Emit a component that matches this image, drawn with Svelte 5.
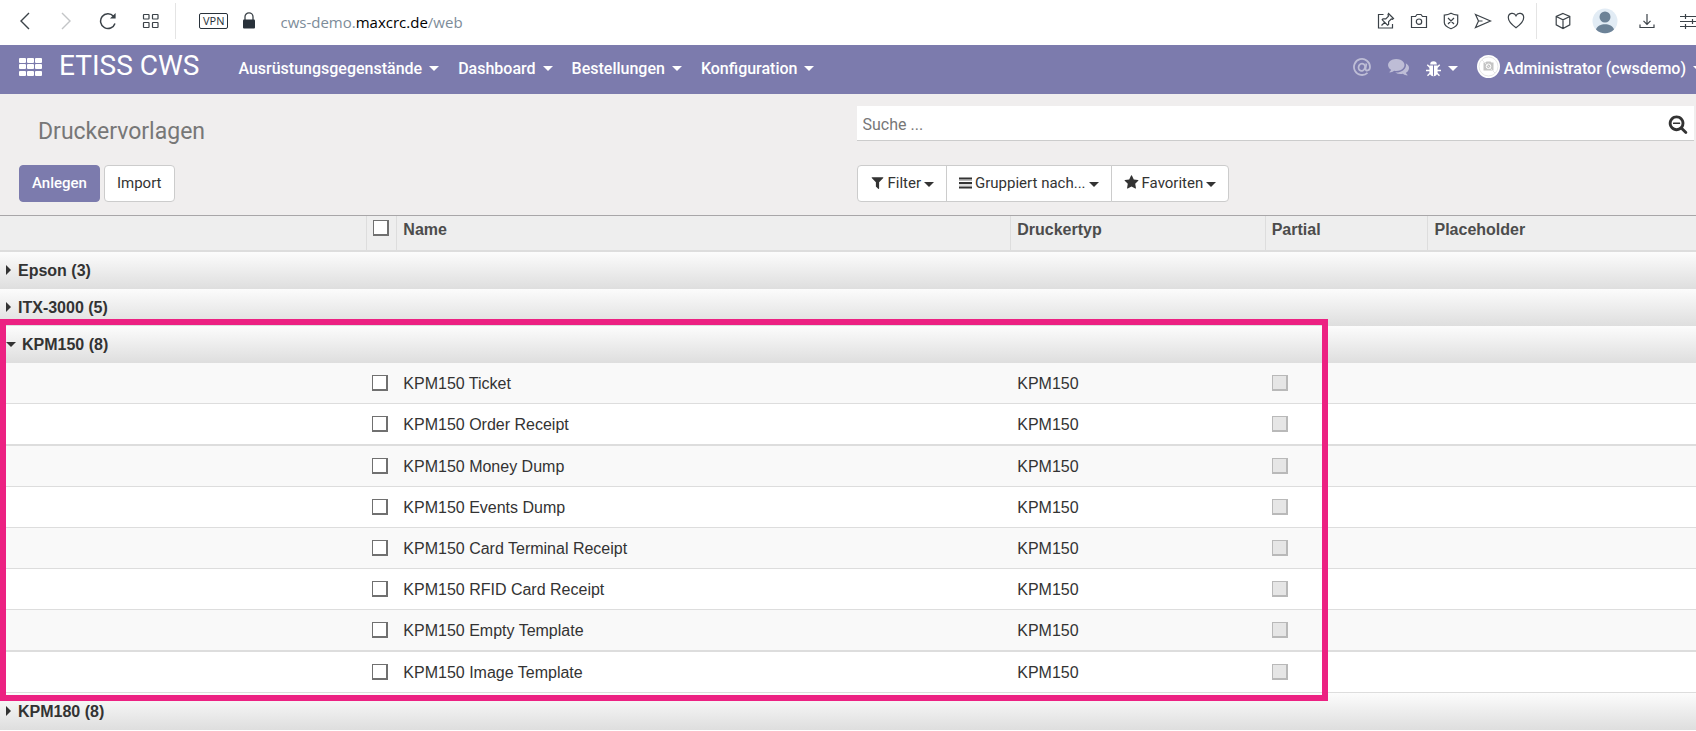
<script lang="ts">
    type Group = {
        name: string,
        count: number,
        open: boolean,
        rows: string[]
    }

    const menus = ["Ausrüstungsgegenstände", "Dashboard", "Bestellungen", "Konfiguration"];

    let groups: Group[] = $state([
        { name: "Epson", count: 3, open: false, rows: [] },
        { name: "ITX-3000", count: 5, open: false, rows: [] },
        {
            name: "KPM150",
            count: 8,
            open: true,
            rows: [
                "Ticket",
                "Order Receipt",
                "Money Dump",
                "Events Dump",
                "Card Terminal Receipt",
                "RFID Card Receipt",
                "Empty Template",
                "Image Template",
            ],
        },
        { name: "KPM180", count: 8, open: false, rows: [] },
    ]);

    let search = $state("");
</script>

{#snippet fa(path: string, size: number)}
    <svg class="fa" width={size} height={size} viewBox="0 0 1792 1792" aria-hidden="true">
        <path d={path} />
    </svg>
{/snippet}

<div class="browser">
    <button class="tool" aria-label="Zurück">
        <svg width="16" height="18" viewBox="0 0 16 18"><path d="M12 1 4 9l8 8" stroke-width="1.4" /></svg>
    </button>
    <button class="tool dim" aria-label="Vorwärts">
        <svg width="16" height="18" viewBox="0 0 16 18"><path d="m4 1 8 8-8 8" stroke-width="1.4" /></svg>
    </button>
    <button class="tool" aria-label="Neu laden">
        <svg width="18" height="18" viewBox="0 0 18 18">
            <path d="M16 11.500A7.400 7.400 0 1 1 14.500 4.200" stroke-width="1.500" />
            <path d="M16.600 1v5.600H11z" fill="#3b4248" stroke="none" />
        </svg>
    </button>
    <button class="tool" aria-label="Schnellwahl">
        <svg width="18" height="16" viewBox="0 0 18 16">
            <rect x="1.500" y="1.500" width="5.500" height="4.500" rx="0.500" />
            <rect x="10.500" y="1.500" width="5.500" height="4.500" rx="0.500" />
            <rect x="1.500" y="9.500" width="5.500" height="5" rx="0.500" />
            <rect x="10.500" y="9.500" width="5.500" height="5" rx="0.500" />
        </svg>
    </button>
    <div class="address">
        <span class="vpn">VPN</span>
        <svg width="14" height="17" viewBox="0 0 14 17" aria-hidden="true">
            <path d="M3 8V4.800a4 4 0 0 1 8 0V8" stroke-width="1.300" />
            <rect x="1" y="7.500" width="12" height="9" rx="1" fill="#28313a" stroke="none" />
        </svg>
        <span class="url">cws-demo.<b>maxcrc.de</b>/web</span>
    </div>
    <div class="tools">
        <button class="tool" aria-label="Anheften">
            <svg width="18" height="18" viewBox="0 0 18 18">
                <path d="M6.500 2.500H1.500V16H15.500v-4M4.500 13.500 8 10M11.500 1.500l5 5-1 .8-1.200-.3-2.700 2.700v2.800l-1 .7-5.400-5.400.8-1h2.800l2.700-2.700-.5-1.300z" />
            </svg>
        </button>
        <button class="tool" aria-label="Schnappschuss">
            <svg width="18" height="16" viewBox="0 0 18 16">
                <path d="M1.500 3.500h4L7 1.500h4l1.500 2h4v11h-15z" />
                <circle cx="9" cy="8.700" r="2.700" />
            </svg>
        </button>
        <button class="tool" aria-label="Werbeblocker">
            <svg width="16" height="18" viewBox="0 0 16 18">
                <path d="M8 1.300c2 1.200 4 1.700 6.700 1.800v7.400c0 2.800-3.200 4.900-6.700 6.200-3.500-1.300-6.700-3.400-6.700-6.200V3.100C4 3 6 2.500 8 1.300zM5 6l6 6M11 6l-6 6" />
            </svg>
        </button>
        <button class="tool" aria-label="My Flow">
            <svg width="18" height="16" viewBox="0 0 18 16"><path d="M1.500 1.500 16.500 8l-15 6.500L4.500 8zM4.500 8h4" /></svg>
        </button>
        <button class="tool" aria-label="Lesezeichen">
            <svg width="18" height="17" viewBox="0 0 18 17">
                <path d="M9 15.800C5.500 13.300 1.300 9.500 1.300 5.600c0-5 6-5.600 7.700-1.800 1.700-3.800 7.700-3.200 7.700 1.800 0 3.900-4.200 7.700-7.700 10.200z" />
            </svg>
        </button>
        <span class="divider"></span>
        <button class="tool" aria-label="Wallet">
            <svg width="16" height="18" viewBox="0 0 16 18">
                <path d="M8 1.500l6.800 3v8.300L8 16.500l-6.800-3.700V4.500zM1.200 4.500 8 7.800l6.800-3.300M8 7.800v8.700" />
            </svg>
        </button>
        <button class="tool" aria-label="Profil">
            <svg width="26" height="26" viewBox="0 0 26 26">
                <circle cx="13" cy="13" r="12.500" fill="#e2ecf5" stroke="none" />
                <circle cx="13" cy="9" r="5.500" fill="#6c8297" stroke="none" />
                <path d="M4 21.500c2-7 16-7 18 0a12.500 12.500 0 0 1-18 0z" fill="#6c8297" stroke="none" />
            </svg>
        </button>
        <button class="tool" aria-label="Downloads">
            <svg width="16" height="16" viewBox="0 0 16 16"><path d="M8 1v10M4.500 7.800 8 11.300l3.500-3.500M1 11.500v3h14v-3" /></svg>
        </button>
        <button class="tool" aria-label="Einfache Einrichtung">
            <svg width="22" height="16" viewBox="-4 0 22 16"><path d="M0 3.500h18M0 8.500h18M0 13.500h18M5.500 1v5M12.500 6v5M5.500 11v5" /></svg>
        </button>
    </div>
</div>

<nav>
    <a class="apps" href="#apps" aria-label="Apps">
        <svg width="23" height="18" viewBox="0 0 23 18">
            {#each [0, 8, 16] as x}
                {#each [0, 6, 13] as y}
                    <rect {x} {y} width="7" height="5" rx="1" fill="#fff" />
                {/each}
            {/each}
        </svg>
    </a>
    <a class="brand" href="#home">ETISS CWS</a>
    <div class="menus">
        {#each menus as menu}
            <a href="#{menu}">{menu}<i class="caret"></i></a>
        {/each}
    </div>
    <div class="systray">
        <a class="faded" href="#mentions" aria-label="Erwähnungen">
            <svg width="18" height="18" viewBox="0 0 18 18" fill="none" stroke="#fff" stroke-width="1.800">
                <path d="M14.500 14.800A8 8 0 1 1 17 9c0 4-4.800 4.800-4.500 1.500l.9-5" />
                <ellipse cx="8.800" cy="9.200" rx="3.200" ry="3.600" transform="rotate(20 8.800 9.200)" />
            </svg>
        </a>
        <a class="faded comments" href="#chat" aria-label="Unterhaltungen">
            {@render fa("M1408 768q0 139-94 257t-256.500 186.500-353.500 68.500q-86 0-176-16-124 88-278 128-36 9-86 16h-3q-11 0-20.500-8t-11.500-21q-1-3-1-6.500t.5-6.500 2-6l2.500-5 3.500-5.500 4-5 4.500-5 4-4.500q5-6 23-25t26-29.500 22.500-29 25-38.500 20.500-44q-124-72-195-177t-71-224q0-139 94-257t256.500-186.500 353.500-68.500 353.500 68.500 256.500 186.500 94 257zm384 256q0 120-71 224.500t-195 176.500q10 24 20.500 44t25 38.500 22.500 29 26 29.500 23 25q1 1 4 4.500t4.500 5 4 5 3.500 5.500l2.500 5 2 6 .5 6.500-1 6.500q-3 14-13 22t-22 7q-50-7-86-16-154-40-278-128-90 16-176 16-271 0-472-132 58 4 88 4 161 0 309-45t264-129q125-92 192-212t67-254q0-77-23-152 129 71 204 178t75 230z", 21)}
        </a>
        <a class="debug" href="#debug" aria-label="Debug">
            <svg width="15" height="16" viewBox="0 0 15 16" fill="#fff">
                <path d="M4.200 3.600a3.300 3.300 0 0 1 6.600 0z" />
                <path d="M3.400 4.500H7v10.300h1V4.500h3.600v6.500c0 2.400-1.700 4.200-4.100 4.200S3.400 13.400 3.400 11z" />
                <path d="M4 6.500 1.300 3.800M11 6.500l2.700-2.700M4 9.500H0M11 9.500h4M4.300 12l-2.800 2.800M10.700 12l2.800 2.800" stroke="#fff" stroke-width="1.400" />
            </svg>
            <i class="caret"></i>
        </a>
        <a class="user" href="#user">
            <svg width="23" height="23" viewBox="0 0 23 23" aria-hidden="true">
                <circle cx="11.500" cy="11.500" r="11.500" fill="#fff" />
                <circle cx="11.500" cy="11.500" r="9.500" fill="none" stroke="#e6e6e6" />
                <path d="M6.500 7.500h2l1-1h4l1 1h2v8h-10z" fill="#c4c4c4" />
                <circle cx="11.500" cy="11.300" r="2.300" fill="#c4c4c4" stroke="#fff" />
                <path d="m5 5 13 13" stroke="#e6e6e6" />
            </svg>
            <span>Administrator (cwsdemo)</span>
            <i class="caret"></i>
        </a>
    </div>
</nav>

<header class="panel">
    <div class="left">
        <h1>Druckervorlagen</h1>
        <div class="buttons">
            <button class="btn primary">Anlegen</button>
            <button class="btn">Import</button>
        </div>
    </div>
    <div class="right">
        <div class="search">
            <input type="text" placeholder="Suche ..." aria-label="Suche" bind:value={search} />
            <button aria-label="Erweiterte Suche">
                {@render fa("M1088 800v64q0 13-9.500 22.500t-22.500 9.500h-576q-13 0-22.500-9.500t-9.500-22.500v-64q0-13 9.500-22.500t22.500-9.500h576q13 0 22.500 9.500t9.500 22.500zm128 32q0-185-131.500-316.500t-316.500-131.500-316.500 131.500-131.500 316.500 131.500 316.500 316.500 131.500 316.500-131.500 131.500-316.500zm512 832q0 53-37.500 90.500t-90.500 37.500q-54 0-90-38l-343-342q-179 124-399 124-143 0-273.500-55.500t-225-150-150-225-55.500-273.500 55.500-273.500 150-225 225-150 273.500-55.500 273.500 55.500 225 150 150 225 55.500 273.500q0 220-124 399l343 343q37 37 37 90z", 20)}
            </button>
        </div>
        <div class="filters">
            <button class="btn">
                {@render fa("M1595 295q17 41-14 70l-493 493v742q0 42-39 59-13 5-25 5-27 0-45-19l-256-256q-19-19-19-45v-486l-493-493q-31-29-14-70 17-39 59-39h1280q42 0 59 39z", 15)}
                Filter<i class="caret"></i>
            </button>
            <button class="btn">
                <svg class="bars" width="13" height="12" viewBox="0 0 13 12" aria-hidden="true">
                    <path d="M0 1.500h13M0 6h13M0 10.500h13" stroke="#333" stroke-width="2" />
                    <path d="M0 3.500h13M0 8h13" stroke="#bbb" />
                </svg>
                Gruppiert nach...<i class="caret"></i>
            </button>
            <button class="btn">
                {@render fa("M1728 647q0 22-26 48l-363 354 86 500q1 7 1 20 0 21-10.500 35.500t-30.500 14.500q-19 0-40-12l-449-236-449 236q-22 12-40 12-21 0-31.500-14.500t-10.500-35.500q0-6 2-20l86-500-364-354q-25-27-25-48 0-37 56-46l502-73 225-455q19-41 49-41t49 41l225 455 502 73q56 9 56 46z", 15)}
                Favoriten<i class="caret"></i>
            </button>
        </div>
    </div>
</header>

<main>
    <table>
        <colgroup>
            <col class="c-group" />
            <col class="c-check" />
            <col class="c-name" />
            <col class="c-type" />
            <col class="c-partial" />
            <col />
        </colgroup>
        <thead>
            <tr>
                <th></th>
                <th class="check"><input type="checkbox" aria-label="Alle auswählen" /></th>
                <th>Name</th>
                <th>Druckertyp</th>
                <th>Partial</th>
                <th>Placeholder</th>
            </tr>
        </thead>
        {#each groups as group}
            <tbody>
                <tr class="group" onclick={() => (group.open = !group.open)}>
                    <th colspan="6"><i class="arrow" class:open={group.open}></i>{group.name} ({group.count})</th>
                </tr>
            </tbody>
            {#if group.open}
                <tbody class="rows">
                    {#each group.rows as row}
                        <tr>
                            <td></td>
                            <td class="check"><input type="checkbox" aria-label="{group.name} {row}" /></td>
                            <td>{group.name} {row}</td>
                            <td>{group.name}</td>
                            <td><input type="checkbox" disabled aria-label="Partial" /></td>
                            <td></td>
                        </tr>
                    {/each}
                </tbody>
            {/if}
        {/each}
    </table>
    <div class="marker"></div>
</main>

<style>
    :global(body) {
        background: #fff;
        color: #333;
        font-family: Roboto, "Liberation Sans", sans-serif;
        overflow: hidden;
    }

    a {
        color: inherit;
        text-decoration: none;
    }

    button {
        font: inherit;
        color: inherit;
        cursor: pointer;
    }

    svg {
        display: block;
        flex: none;
    }

    .fa {
        fill: currentColor;
    }

    .caret {
        display: inline-block;
        flex: none;
        border: 5px solid transparent;
        border-top-color: currentColor;
        border-bottom: 0;
    }

    /* browser toolbar */
    .browser {
        display: flex;
        align-items: center;
        height: 45px;
        padding-left: 17px;
        padding-bottom: 4px;
        box-sizing: border-box;
        overflow: hidden;
    }

    .browser svg {
        fill: none;
        stroke: #3b4248;
        stroke-width: 1.2;
    }

    .tool {
        display: flex;
        padding: 0;
        border: 0;
        background: none;
        margin-right: 25px;
    }

    .dim {
        opacity: 0.3;
    }

    .divider {
        width: 1px;
        height: 36px;
        background: #e4e4e4;
    }

    .address {
        display: flex;
        flex: 1;
        align-items: center;
        height: 36px;
        margin-left: -10px;
        padding-left: 23px;
        border-left: 1px solid #e4e4e4;
    }

    .vpn {
        margin-right: 14px;
        padding: 0 3px;
        border: 1px solid #28313a;
        border-radius: 2px;
        font: 11px/14px "Open Sans", sans-serif;
        color: #28313a;
    }

    .url {
        margin-left: 24px;
        padding-top: 3px;
        font: 15px/22px "Open Sans", sans-serif;
        color: #7d8c99;
    }

    .url b {
        font-weight: 400;
        color: #000;
    }

    .tools {
        display: flex;
        align-items: center;
        margin-right: -2px;
    }

    .tools .tool {
        margin-right: 15px;
    }

    .tools .divider {
        margin: 0 18px 0 -4px;
    }

    .tools .divider ~ .tool {
        margin-right: 21px;
    }

    .tools .tool:last-child {
        margin-right: 0;
    }

    /* odoo navbar */
    nav {
        display: flex;
        height: 49px;
        padding-left: 19px;
        background: #7c7bad;
        color: #fff;
        overflow: hidden;
    }

    .apps {
        padding-top: 13px;
    }

    .brand {
        margin-left: 17px;
        font-size: 28px;
        line-height: 42px;
    }

    .menus,
    .systray {
        display: flex;
        height: 47px;
        font-size: 16px;
        font-weight: 500;
    }

    .menus {
        flex: 1;
        gap: 19px;
        margin-left: 39px;
    }

    .menus a {
        display: flex;
        align-items: center;
        gap: 7px;
    }

    .systray {
        margin-right: -7px;
    }

    .systray a {
        display: flex;
        align-items: center;
    }

    .systray .faded {
        opacity: 0.5;
        padding-bottom: 4px;
    }

    .comments {
        margin-left: 17px;
    }

    .debug {
        gap: 7px;
        margin-left: 17px;
    }

    .user {
        margin-left: 19px;
    }

    .user svg {
        margin-bottom: 5px;
    }

    .user span {
        margin: 0 7px 0 4px;
    }

    /* control panel */
    .panel {
        display: grid;
        grid-template-columns: 1fr 1fr;
        padding: 12px 2px 13px 19px;
        border-bottom: 1px solid #a8a6a8;
        background: #f0eeee;
    }

    .left,
    .right {
        display: flex;
        flex-direction: column;
        justify-content: space-between;
        height: 96px;
    }

    h1 {
        margin: 0;
        padding: 9px 0 0 19px;
        font-size: 23px;
        font-weight: 400;
        line-height: 34px;
        color: #777;
    }

    .buttons {
        display: flex;
        gap: 4px;
    }

    .btn {
        display: flex;
        align-items: center;
        height: 37px;
        padding: 0 12px 2px;
        border: 1px solid #ccc;
        border-radius: 4px;
        background: #fff;
        font-size: 15px;
    }

    .primary {
        border-color: #7c7bad;
        background: #7c7bad;
        color: #fff;
        font-weight: 500;
    }

    .search {
        display: flex;
        height: 34px;
        border-bottom: 1px solid #ccc;
        background: #fff;
    }

    .search input {
        flex: 1;
        padding: 2px 0 0 6px;
        border: 0;
        background: none;
        font: 16px Roboto, sans-serif;
        outline: none;
    }

    .search input::placeholder {
        color: #777;
    }

    .search button {
        padding: 2px 6px 0;
        border: 0;
        background: none;
    }

    .filters {
        display: flex;
    }

    .filters .btn {
        gap: 3px;
        border-radius: 0;
    }

    .filters .btn + .btn {
        margin-left: -1px;
    }

    .filters .btn:first-child {
        border-radius: 4px 0 0 4px;
    }

    .filters .btn:last-child {
        border-radius: 0 4px 4px 0;
    }

    .filters .caret {
        margin-top: 3px;
    }

    /* list */
    main {
        position: relative;
    }

    table {
        width: 100%;
        table-layout: fixed;
        border-collapse: separate;
        border-spacing: 0;
        font-family: "Liberation Sans", Arial, sans-serif;
        font-size: 16px;
        line-height: 20px;
    }

    .c-group {
        width: 21.6%;
    }

    .c-check {
        width: 30px;
    }

    .c-name {
        width: 36.2%;
    }

    .c-type {
        width: 15%;
    }

    .c-partial {
        width: 9.6%;
    }

    th,
    td {
        padding: 0 0 0 6px;
        text-align: left;
    }

    thead th {
        height: 27px;
        padding-bottom: 7px;
        border-bottom: 2px solid #ddd;
        border-left: 1px solid #ddd;
        background: #eee;
        color: #4c4c4c;
    }

    thead th:first-child {
        border-left: 0;
    }

    .group th {
        height: 37px;
        background: linear-gradient(#fcfcfc, #dedede);
        cursor: pointer;
    }

    .arrow {
        display: inline-block;
        margin-right: 7px;
        border: 5px solid transparent;
        border-left-color: currentColor;
        border-right: 0;
        vertical-align: 1px;
    }

    .arrow.open {
        margin-right: 6px;
        border: 5px solid transparent;
        border-top-color: currentColor;
        border-bottom: 0;
        vertical-align: 3px;
    }

    .rows td {
        height: 38px;
        padding-top: 2px;
        padding-left: 7px;
        border-bottom: 1px solid #ddd;
    }

    .rows tr:nth-child(odd) {
        background: #f9f9f9;
    }

    .rows tr:nth-child(5n + 2) td {
        border-bottom-width: 2px;
    }

    thead .check,
    .rows .check {
        padding-left: 6px;
    }

    input[type="checkbox"] {
        display: block;
        appearance: none;
        box-sizing: border-box;
        width: 16px;
        height: 16px;
        margin: 0 0 3px;
        border: 1px solid #707070;
        border-right-width: 2px;
        border-bottom-width: 2px;
        background: #fff;
    }

    input[type="checkbox"]:checked {
        background: #707070;
    }

    input[type="checkbox"]:disabled {
        border-color: #b9b9b9;
        background: #e6e6e6;
    }

    .marker {
        position: absolute;
        top: 103px;
        left: 0;
        width: 78.3%;
        height: 382px;
        box-sizing: border-box;
        border: 6px solid #ec2182;
        pointer-events: none;
    }
</style>
